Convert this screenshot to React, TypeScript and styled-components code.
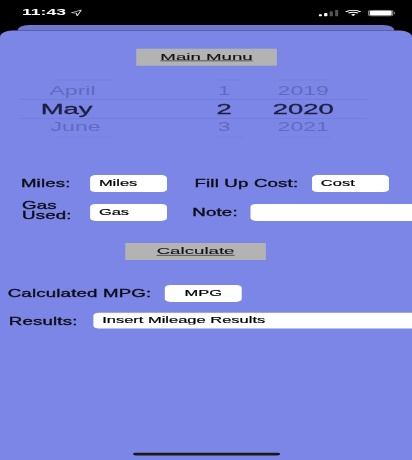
import React from "react";
import styled, { createGlobalStyle } from "styled-components";

// the source is a 375x812 phone capture squashed into 412x460
const GlobalStyle = createGlobalStyle`
  html, body {
    margin: 0;
    width: 412px;
    height: 460px;
    overflow: hidden;
    background: #000;
  }
`;

const Frame = styled.div`
  width: 412px;
  height: 460px;
  overflow: hidden;
`;

const Stage = styled.div`
  width: 375px;
  height: 812px;
  display: flex;
  flex-direction: column;
  background: #000;
  color: #000;
  font-family: "Liberation Sans", Arial, sans-serif;
  transform: scale(1.0987, 0.5665);
  transform-origin: 0 0;
  filter: blur(0.45px);
`;

const StatusBar = styled.div`
  height: 44px;
  flex: none;
  display: flex;
  align-items: center;
  padding: 0 15px 0 20px;
  color: #fff;
`;

const Time = styled.span`
  font-size: 16px;
  font-weight: 700;
  margin-top: -1px;
`;

const StatusIcons = styled.div`
  margin-left: auto;
  display: flex;
  align-items: center;
  gap: 6px;
  margin-top: 1px;
`;

const BackSheet = styled.div`
  height: 10px;
  flex: none;
  margin: 0 16px;
  background: #6e78ce;
  border-radius: 10px 10px 0 0;
`;

const Sheet = styled.main`
  flex: 1;
  position: relative;
  display: flex;
  flex-direction: column;
  padding-top: 32px;
  background: #7c86e6;
  border-radius: 11px 11px 0 0;
  overflow: hidden;
`;

const LinkButton = styled.button<{ $left: number; $top?: number }>`
  align-self: flex-start;
  width: 128px;
  height: 30px;
  margin: ${(p) => p.$top ?? 0}px 0 0 ${(p) => p.$left}px;
  padding: 0;
  border: 0;
  background: #b3b3b3;
  color: #111;
  font: inherit;
  font-size: 17px;
  text-decoration: underline;
  -webkit-text-stroke: 0.2px #111;
`;

const Picker = styled.div`
  width: 316px;
  margin: 21px 0 0 18px;
  display: flex;
  flex-direction: column;
`;

const PickerRow = styled.div<{ $height: number; $selected?: boolean; $indent: number; $opacity: number }>`
  height: ${(p) => p.$height}px;
  display: grid;
  grid-template-columns: 166px 40px 104px;
  align-items: center;
  font-size: ${(p) => (p.$selected ? 25 : 21)}px;
  line-height: ${(p) => p.$height}px;
  color: ${(p) => (p.$selected ? "#1d1f42" : `rgba(60, 66, 140, ${p.$opacity})`)};
  border-style: solid;
  border-color: #6f79d2;
  border-width: ${(p) => (p.$selected ? "1px 0" : "0")};
  -webkit-text-stroke: ${(p) => (p.$selected ? "0.5px" : "0")};

  & > span:first-child {
    padding-left: ${(p) => p.$indent}px;
  }
  & > span:not(:first-child) {
    text-align: center;
  }
`;

// barely visible edge of the wheel, the next rows rotated away
const WheelEdge = styled.div`
  height: 9px;
  display: grid;
  grid-template-columns: 32px 54px 94px 24px 32px 48px;
  align-items: center;
`;

const Smudge = styled.i<{ $show?: boolean }>`
  height: 3px;
  background: ${(p) => (p.$show ? "rgba(96, 104, 190, 0.1)" : "transparent")};
`;

const FormRow = styled.div<{ $top: number }>`
  display: flex;
  align-items: center;
  height: 30px;
  margin-top: ${(p) => p.$top}px;
`;

const Label = styled.label<{ $left: number; $width: number; $stacked?: boolean; $shift?: number }>`
  flex: none;
  margin-left: ${(p) => p.$left}px;
  width: ${(p) => p.$width}px;
  font-size: 17px;
  line-height: 16px;
  letter-spacing: 0.15px;
  color: #0d0d14;
  -webkit-text-stroke: 0.5px #0d0d14;
  transform: translateY(${(p) => p.$shift ?? 0}px) scaleY(1.1);
  white-space: ${(p) => (p.$stacked ? "normal" : "nowrap")};
`;

const Field = styled.input<{ $width: number; $height?: number; $center?: boolean }>`
  flex: none;
  box-sizing: border-box;
  width: ${(p) => p.$width}px;
  height: ${(p) => p.$height ?? 30}px;
  padding: 0 8px 3px;
  border: 0;
  border-radius: 5px;
  background: #fff;
  color: #000;
  font: inherit;
  font-size: 15px;
  -webkit-text-stroke: 0.3px #000;
  text-align: ${(p) => (p.$center ? "center" : "left")};
  outline: none;
`;

const HomeIndicator = styled.div`
  position: absolute;
  left: 121px;
  bottom: 8px;
  width: 134px;
  height: 5px;
  border-radius: 3px;
  background: #1a1a1a;
`;

const pickerRows = [
  { month: "April", day: "1", year: "2019", height: 29, indent: 27, opacity: 0.42 },
  { month: "May", day: "2", year: "2020", height: 33, indent: 19, opacity: 1, selected: true },
  { month: "June", day: "3", year: "2021", height: 28, indent: 28, opacity: 0.42 },
];

const LocationArrow = () => (
  <svg width="11" height="13" viewBox="0 0 11 13" style={{ marginLeft: 4 }}>
    <path d="M10 1.5 1 6.6l4.4.6.9 4.8z" fill="none" stroke="#ddd" strokeWidth="1" strokeLinejoin="round" />
  </svg>
);

const Signal = () => (
  <svg width="18" height="12" viewBox="0 0 18 12">
    <rect x="0" y="8" width="3" height="4" rx="1" fill="#fff" />
    <rect x="5" y="6" width="3" height="6" rx="1" fill="#fff" />
    <rect x="10" y="3" width="3" height="9" rx="1" fill="#555" />
    <rect x="15" y="0" width="3" height="12" rx="1" fill="#555" />
  </svg>
);

const Wifi = () => (
  <svg width="15" height="12" viewBox="0 0 15 12">
    <path d="M.8 3.8a9.6 9.6 0 0 1 13.4 0" fill="none" stroke="#fff" strokeWidth="1.8" />
    <path d="M3.1 6.3a6.3 6.3 0 0 1 8.8 0" fill="none" stroke="#fff" strokeWidth="1.8" />
    <path d="M5.4 8.7a3 3 0 0 1 4.2 0L7.5 11.2z" fill="#fff" />
  </svg>
);

const Battery = () => (
  <svg width="25" height="12" viewBox="0 0 25 12">
    <rect x=".5" y=".5" width="22" height="11" rx="3" fill="none" stroke="#999" />
    <rect x="1.5" y="1.5" width="20" height="9" rx="2" fill="#fff" />
    <path d="M23.6 4v4c.8-.3 1.4-1.1 1.4-2s-.6-1.7-1.4-2z" fill="#888" />
  </svg>
);

const Edge = () => (
  <WheelEdge>
    <Smudge />
    <Smudge $show />
    <Smudge />
    <Smudge $show />
    <Smudge />
    <Smudge $show />
  </WheelEdge>
);

export default function App() {
  return (
    <Frame>
      <GlobalStyle />
      <Stage>
        <StatusBar>
          <Time>11:43</Time>
          <LocationArrow />
          <StatusIcons>
            <Signal />
            <Wifi />
            <Battery />
          </StatusIcons>
        </StatusBar>
        <BackSheet />
        <Sheet>
          <LinkButton $left={124}>Main Munu</LinkButton>
          <Picker>
            <Edge />
            {pickerRows.map((row) => (
              <PickerRow
                key={row.month}
                $height={row.height}
                $indent={row.indent}
                $opacity={row.opacity}
                $selected={row.selected}
              >
                <span>{row.month}</span>
                <span>{row.day}</span>
                <span>{row.year}</span>
              </PickerRow>
            ))}
            <Edge />
          </Picker>

          <FormRow $top={62}>
            <Label $left={19} $width={63}>Miles:</Label>
            <Field $width={70} readOnly value="Miles" />
            <Label $left={25} $width={107}>Fill Up Cost:</Label>
            <Field $width={70} readOnly value="Cost" />
          </FormRow>
          <FormRow $top={21}>
            <Label $left={20} $width={62} $stacked $shift={-2}>Gas Used:</Label>
            <Field $width={70} readOnly value="Gas" />
            <Label $left={23} $width={53}>Note:</Label>
            <Field $width={180} readOnly value="" />
          </FormRow>

          <LinkButton $left={114} $top={39}>Calculate</LinkButton>

          <FormRow $top={44}>
            <Label $left={7} $width={143}>Calculated MPG:</Label>
            <Field $width={70} $center readOnly value="MPG" />
          </FormRow>
          <FormRow $top={18}>
            <Label $left={8} $width={77} $shift={2}>Results:</Label>
            <Field $width={300} $height={28} readOnly value="Insert Mileage Results" />
          </FormRow>

          <HomeIndicator />
        </Sheet>
      </Stage>
    </Frame>
  );
}
